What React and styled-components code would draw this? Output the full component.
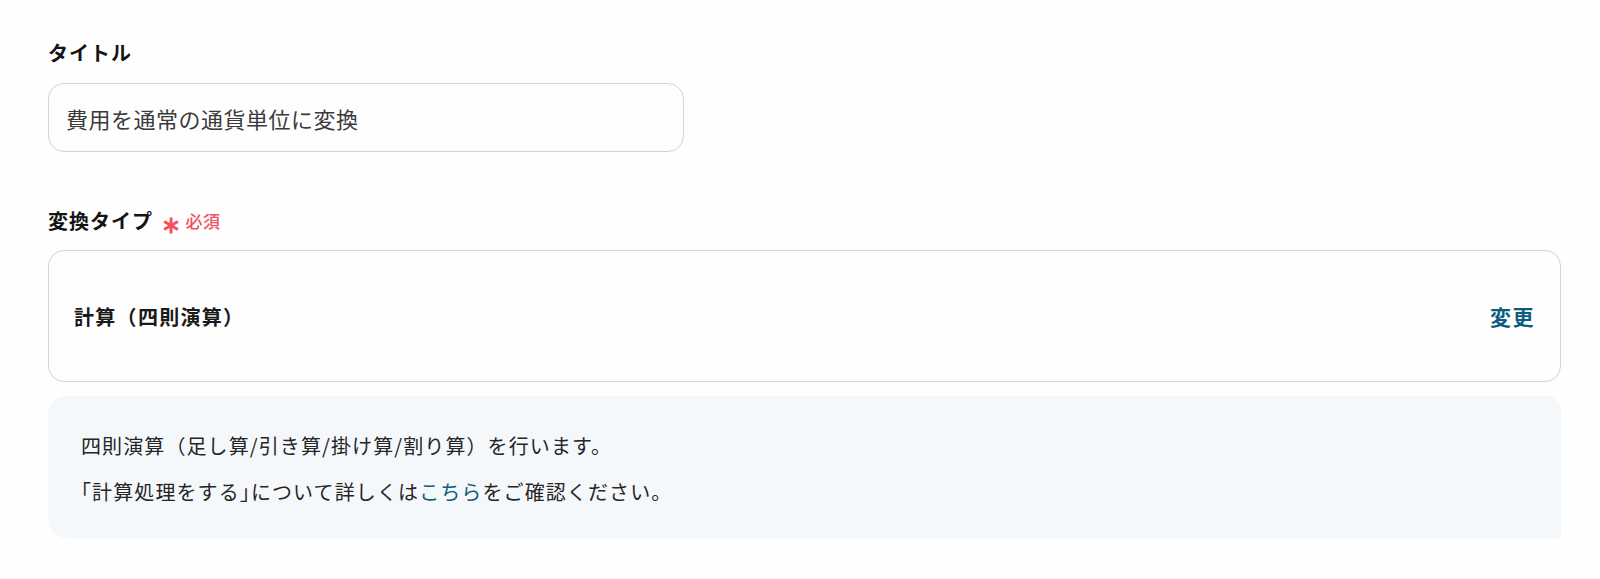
import React from 'react';
import styled, { createGlobalStyle } from 'styled-components';

const GlobalStyle = createGlobalStyle`
  body {
    margin: 0;
    background: #fffeff;
    font-family: "Noto Sans CJK JP", "Noto Sans", sans-serif;
    color: #1f1f1f;
  }
`;

const Page = styled.main`
  padding: 38px 39px 40px 48px;
  display: flex;
  flex-direction: column;
`;

const Field = styled.section`
  display: flex;
  flex-direction: column;
  margin-bottom: ${(p) => p.$gap || 0}px;
`;

const Label = styled.div`
  display: flex;
  align-items: center;
  gap: 8px;
  height: 28px;
  margin-bottom: ${(p) => p.$space || 17}px;
  font-size: 20px;
  font-weight: 700;
  letter-spacing: 1px;
  color: #141414;
`;

const Required = styled.span`
  display: inline-flex;
  align-items: center;
  gap: 4px;
  font-size: 17px;
  font-weight: 500;
  letter-spacing: 0.5px;
  color: #f4505e;
`;

const Star = styled.span`
  font-size: 24px;
  font-weight: 700;
  line-height: 1;
  margin-top: 6px;
`;

const TextInput = styled.div`
  width: 636px;
  height: 69px;
  box-sizing: border-box;
  display: flex;
  align-items: center;
  padding: 0 17px;
  border: 1.5px solid #d3d3d8;
  border-radius: 16px;
  font-size: 22px;
  letter-spacing: 0.5px;
  color: #3a3a3a;
`;

const TypeBox = styled.div`
  height: 132px;
  box-sizing: border-box;
  display: flex;
  align-items: center;
  justify-content: space-between;
  padding: 0 25px;
  border: 1.5px solid #d3d3d8;
  border-radius: 16px;
  font-size: 20px;
  font-weight: 700;
  letter-spacing: 1.3px;
  color: #1a1a1a;
`;

const ChangeLink = styled.a`
  color: #0c5c80;
  font-size: 21px;
  font-weight: 700;
  letter-spacing: 1.5px;
  text-decoration: none;
  cursor: pointer;
`;

const Info = styled.div`
  margin-top: 14px;
  background: #f5f8fb;
  border-radius: 18px 14px 0 18px;
  padding: 27px 32px 23px 33px;
  font-size: 20px;
  line-height: 46px;
  letter-spacing: 1.1px;
  color: #262626;

  p {
    margin: 0;
  }
`;

const Bracket = styled.span`
  font-feature-settings: "halt";
`;

const InlineLink = styled.a`
  color: #0c5c80;
  text-decoration: none;
`;

export default function App() {
  return (
    <>
      <GlobalStyle />
      <Page>
        <Field $gap={54}>
          <Label>タイトル</Label>
          <TextInput>費用を通常の通貨単位に変換</TextInput>
        </Field>
        <Field>
          <Label $space={16}>
            変換タイプ
            <Required>
              <Star>∗</Star>必須
            </Required>
          </Label>
          <TypeBox>
            <span>計算（四則演算）</span>
            <ChangeLink>変更</ChangeLink>
          </TypeBox>
          <Info>
            <p>四則演算（足し算/引き算/掛け算/割り算）を行います。</p>
            <p>
              <Bracket>「</Bracket>計算処理をする<Bracket>」</Bracket>について詳しくは
              <InlineLink>こちら</InlineLink>をご確認ください。
            </p>
          </Info>
        </Field>
      </Page>
    </>
  );
}
